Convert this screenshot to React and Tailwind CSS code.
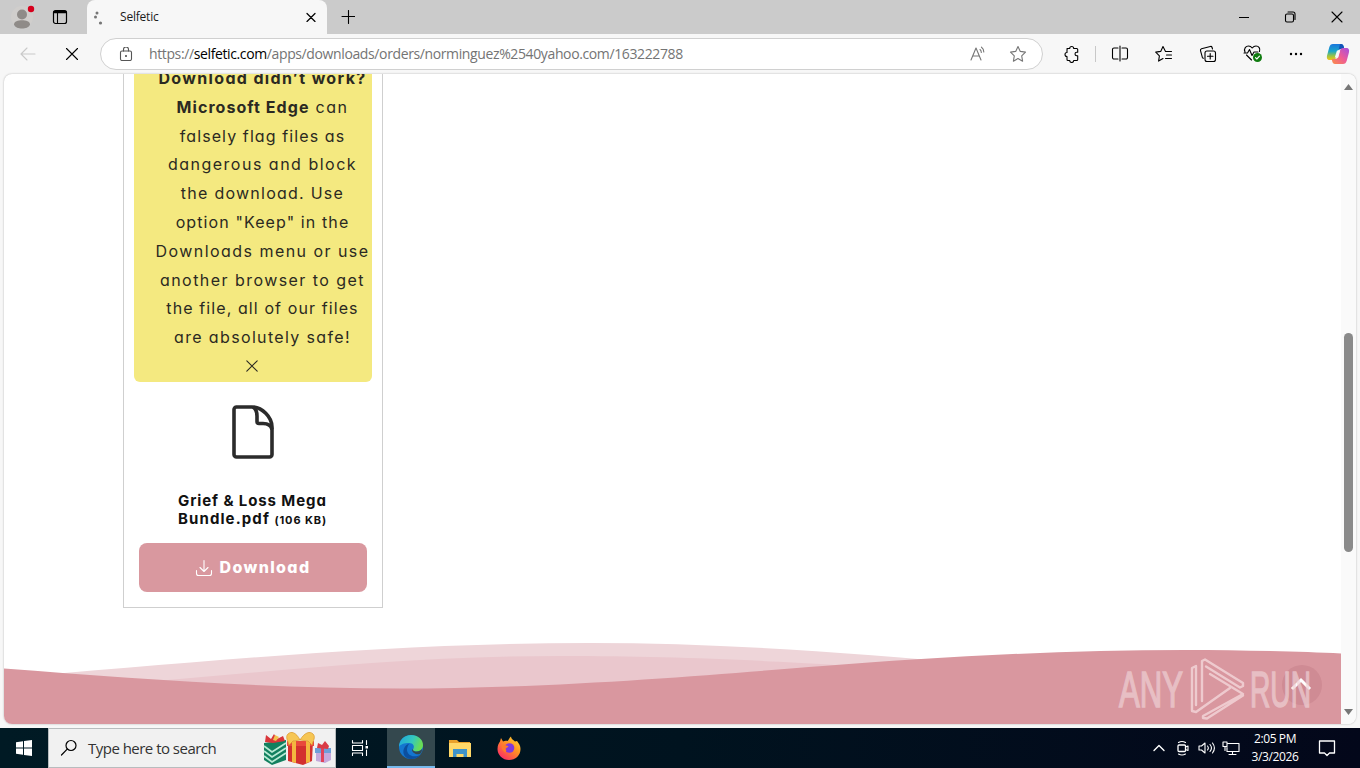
import React from 'react'

const noticeLines = [
  { text: 'falsely flag files as', track: 'tracking-[1.1px]' },
  { text: 'dangerous and block', track: 'tracking-[1.5px]' },
  { text: 'the download. Use', track: 'tracking-[1.25px]' },
  { text: 'option "Keep" in the', track: 'tracking-[1.1px]' },
  { text: 'Downloads menu or use', track: 'tracking-[1.45px]' },
  { text: 'another browser to get', track: 'tracking-[1.45px]' },
  { text: 'the file, all of our files', track: 'tracking-[1.1px]' },
  { text: 'are absolutely safe!', track: 'tracking-[1.35px]' }
]

const Icon = ({ size = 18, className = '', children }) => (
  <svg
    width={size}
    height={size}
    viewBox={`0 0 ${size} ${size}`}
    fill="none"
    stroke="currentColor"
    strokeWidth="1.1"
    strokeLinecap="round"
    strokeLinejoin="round"
    className={`shrink-0 ${className}`}
  >
    {children}
  </svg>
)

const starPath = 'M9 1.5l2.3 4.9 5.2.7-3.8 3.7.9 5.4L9 13.6l-4.6 2.6.9-5.4L1.5 7.1l5.2-.7z'

const TitleBar = () => (
  <div className="flex h-[34px] shrink-0 bg-[#cbcbcb]">
    <div className="flex w-[87px] items-center rounded-br-lg bg-[#cbcbcb] pl-[11px]">
      <svg width="26" height="26" viewBox="0 0 26 26" className="shrink-0">
        <circle cx="11" cy="13" r="11" fill="#d0cecc" />
        <circle cx="11" cy="10.500" r="5" fill="#8f8b88" />
        <path d="M3 20.500c0-3 4-4.200 8-4.200s8 1.200 8 4.200c-1 3-4.500 4-8 4s-7-1-8-4z" fill="#8f8b88" />
        <circle cx="20" cy="5" r="3.200" fill="#d6001c" />
      </svg>
      <Icon size={16} className="ml-[15px] text-black">
        <rect x="1.500" y="1.500" width="13" height="13" rx="2" strokeWidth="1.200" />
        <path d="M5.500 4v10" strokeWidth="1.100" />
        <path d="M2.500 3h11" strokeWidth="2.500" />
      </Icon>
    </div>
    <div className="flex w-[240px] items-center rounded-t-lg bg-[#f7f7f7] pl-[6px]">
      <svg width="14" height="16" viewBox="0 0 14 16" fill="#767676">
        <circle cx="4" cy="4" r="1.500" />
        <circle cx="2.500" cy="8" r="1.500" />
        <circle cx="7.500" cy="14" r="1.600" />
      </svg>
      <span className="ml-[13px] grow text-[12px] tracking-[-0.2px] text-[#1b1b1b]">Selfetic</span>
      <Icon size={10} className="mr-[11px] text-black">
        <path d="M1 1.500l8 8M9 1.500l-8 8" strokeWidth="1.200" />
      </Icon>
    </div>
    <Icon size={14} className="mt-[10px] ml-[14px] text-black">
      <path d="M7.500 .5v13M1 6.500h13" />
    </Icon>
    <div className="ml-auto flex items-center gap-[35px] pr-[17px] text-black">
      <Icon size={10}><path d="M0 5.500h10" /></Icon>
      <Icon size={12}>
        <rect x="1.500" y="3" width="8" height="8" rx="1.500" />
        <path d="M4 1h5a2 2 0 012 2v5.500" />
      </Icon>
      <Icon size={12}><path d="M1 1l10 10M11 1L1 11" /></Icon>
    </div>
  </div>
)

const CopilotLogo = () => (
  <svg width="24" height="24" viewBox="0 0 24 24">
    <defs>
      <linearGradient id="cpA" x1="0" y1="0" x2="0" y2="1">
        <stop offset="0" stopColor="#1b76dd" />
        <stop offset=".45" stopColor="#1ba7c9" />
        <stop offset=".75" stopColor="#9cc443" />
        <stop offset="1" stopColor="#f5c518" />
      </linearGradient>
      <linearGradient id="cpB" x1="1" y1="0" x2="0" y2="1">
        <stop offset="0" stopColor="#a44fe0" />
        <stop offset=".5" stopColor="#ee5b96" />
        <stop offset="1" stopColor="#fb8f45" />
      </linearGradient>
    </defs>
    <path d="M7 2h8c1.600 0 2.300 1 2.700 2.500L18.300 7H15c-2 0-2.800 1-3.300 2.800l-1.500 5.400C9.500 17 8.500 18 7 18H4c-3 0-3.600-2-2.800-5l2-7.500C3.900 3 5 2 7 2z" fill="url(#cpA)" />
    <path d="M14 2h1c1.600 0 2.300 1 2.700 2.500L18.300 7H15c-1.300 0-2 .5-2.500 1.300z" fill="#1254b8" />
    <path d="M17 22H9c-1.600 0-2.300-1-2.700-2.500L5.700 17H9c2 0 2.800-1 3.300-2.800l1.500-5.400C14.500 7 15.500 6 17 6h3c3 0 3.600 2 2.800 5l-2 7.500C20.100 21 19 22 17 22z" fill="url(#cpB)" />
    <path d="M11 8.500h3.200l-2 7H8.800z" fill="#f7f7f7" />
  </svg>
)

const Toolbar = () => (
  <div className="flex h-[39px] shrink-0 items-center bg-[#f7f7f7]">
    <Icon size={16} className="ml-[20px] text-[#c9c9c9]">
      <path d="M15 8H1M7 2L1 8l6 6" />
    </Icon>
    <Icon size={14} className="ml-[29px] text-black">
      <path d="M1.500 1.500l11 11M12.500 1.500l-11 11" />
    </Icon>
    <div className="ml-[21px] flex h-8 w-[943px] items-center rounded-full border border-[#d0d0d0] bg-white pl-[18px]">
      <Icon size={14} className="text-[#555]">
        <rect x="1.500" y="4" width="11" height="9.500" rx="1.500" />
        <path d="M4.500 4V2.500a2.500 2.500 0 015 0V4" />
        <circle cx="7" cy="9" r=".5" fill="currentColor" />
      </Icon>
      <span className="ml-4 text-[14px] tracking-[-0.38px] whitespace-nowrap text-[#747474]">
        https://<span className="text-black">selfetic.com</span>/apps/downloads/orders/norminguez%2540yahoo.com/163222788
      </span>
      <Icon size={18} className="mr-[22px] ml-auto text-[#767676]">
        <path d="M2 15L7 3l5 12M3.700 11h6.600M11 4.500c1 .8 1.300 2 1.300 3M12.500 2.200c1.600 1.200 2.300 3 2.300 4.800" />
      </Icon>
      <Icon size={18} className="mr-[15px] text-[#767676]"><path d={starPath} /></Icon>
    </div>
    <Icon size={18} className="ml-[20px] text-black">
      <path d="M4 3.500h2.700a2 2 0 014 0h3a1 1 0 011 1v2.800h-1a1.700 1.700 0 000 3.400h1v3.800a1 1 0 01-1 1h-3a2 2 0 01-4 0H5a1 1 0 01-1-1v-3a2 2 0 010-4v-3a1 1 0 011-1" />
    </Icon>
    <div className="ml-[14px] h-4 w-px bg-[#c8c8c8]" />
    <Icon size={18} className="ml-[15px] text-black">
      <path d="M7 3H3a1.500 1.500 0 00-1.500 1.500v8A1.500 1.500 0 003 14h4M11 3h4a1.500 1.500 0 011.500 1.500v8A1.500 1.500 0 0115 14h-4M9 1v15" />
    </Icon>
    <Icon size={18} className="ml-[26px] text-black">
      <path d="M10.500 6.500L8 1.500 5.700 6.400.7 7.100l3.700 3.700-.8 5.300L8 13.600M10.500 6.500h6M11.500 10h5M10.500 13.500h6" />
    </Icon>
    <Icon size={18} className="ml-[26px] text-black">
      <rect x="6" y="6" width="10.500" height="10.500" rx="2" />
      <path d="M11.200 8.500v5.500M8.500 11.200h5.500M13.500 4l-.4-1.500a1.500 1.500 0 00-1.800-1L2.500 3.800a1.500 1.500 0 00-1 1.800l1.800 6.600a1.500 1.500 0 001.200 1" />
    </Icon>
    <Icon size={20} className="ml-[26px] text-black">
      <path d="M2 8C.5 4.500 3 2 5.500 2 7.500 2 8.500 3 9.200 4c.8-1 2-2 3.800-2 2.800 0 4.500 2.500 3.500 5.500M3.500 11l5 5M1 9h3.500l2-3.500 2.500 6L11 8h4" />
      <circle cx="14.500" cy="13.500" r="4.500" fill="#107c10" stroke="none" />
      <path d="M12.500 13.700l1.300 1.300 2.700-2.800" stroke="white" />
    </Icon>
    <svg width="14" height="4" viewBox="0 0 14 4" className="ml-[26px]">
      <circle cx="2" cy="2" r="1.200" /><circle cx="7" cy="2" r="1.200" /><circle cx="12" cy="2" r="1.200" />
    </svg>
    <div className="ml-[23px]"><CopilotLogo /></div>
  </div>
)

const DownloadCard = () => (
  <div className="ml-[119px] flex h-[534px] w-[260px] flex-col border-x border-b border-[#cfcfcf] px-[10px] font-['Inter',sans-serif] [font-feature-settings:'cv11'] text-[#2b2922]">
    <div className="-mt-[10px] h-[318px] w-[238px] shrink-0 rounded-b-md bg-[#f4e980] text-center text-[16px] leading-[28.8px] whitespace-nowrap">
      <div className="pl-[19px]">
        <p className="font-bold tracking-[1.35px]">Download didn’t work?</p>
        <p className="tracking-[1.5px]"><strong className="tracking-[1.05px]">Microsoft Edge</strong> can</p>
        {noticeLines.map((line) => (
          <p key={line.text} className={line.track}>{line.text}</p>
        ))}
      </div>
      <Icon size={12} className="mx-auto mt-[8px] -translate-x-px">
        <path d="M.8.8l10.400 10.400M11.200.8L.8 11.200" />
      </Icon>
    </div>
    <svg width="44" height="56" viewBox="0 0 44 56" fill="none" stroke="#2b2b2b" strokeWidth="3.600" strokeLinejoin="round" className="mx-auto mt-[22px] shrink-0">
      <path d="M5 3h16c10 0 20 10 20 20v27.500a2.500 2.500 0 01-2.500 2.500h-33A2.500 2.500 0 013 50.500v-45A2.500 2.500 0 015.500 3z" />
      <path d="M22 3c3 2 4 6 4 9v5.500a2 2 0 002 2h4c4 0 8 1.500 9 6" />
    </svg>
    <h3 className="mt-[32px] pl-[44px] text-[15px] leading-[18px] font-bold tracking-[0.9px] whitespace-nowrap text-[#111]">
      Grief &amp; Loss Mega<br />
      <span className="tracking-[1.1px]">Bundle.pdf</span> <span className="text-[11px]">(106 KB)</span>
    </h3>
    <button className="mt-[14px] ml-[5px] flex h-[49px] w-[228px] shrink-0 items-center justify-center rounded-lg bg-[#d9989f] pb-px text-[16px] font-extrabold tracking-[1.35px] text-white">
      <Icon size={18} className="mt-[2px] mr-[7px] -ml-px">
        <path d="M9 1.500v11M5 8.500l4 4 4-4M1.500 11.500v3a2 2 0 002 2h11a2 2 0 002-2v-3" />
      </Icon>
      Download
    </button>
  </div>
)

const FooterWave = () => (
  <svg width="1337" height="84" viewBox="4 640 1337 84" className="mt-auto shrink-0">
    <path d="M4 678C180 664 380 643 590 643c130 0 250 9 400 22v30H4z" fill="#eed5d9" />
    <path d="M120 684c140-11 280-28 440-28 120 0 200 4 360 14v25H120z" fill="#eac7cd" />
    <path d="M4 668.500C130 678 260 688.500 400 688.500c160 0 320-14.500 423-22.500 107-8.500 237-16 362-16 55 0 115 1.500 156 3.500V725H4z" fill="#d9979f" />
    {/* back to top */}
    <circle cx="1302" cy="685" r="20" fill="#cf8b94" />
    <path d="M1292 689l9-9 9 9" stroke="#fff" strokeWidth="3" fill="none" />
  </svg>
)

const Watermark = () => (
  <svg width="220" height="70" viewBox="1110 655 220 70" className="absolute top-[655px] left-[1110px] overflow-visible opacity-70">
    <g fill="#eed0d4" stroke="#eed0d4" strokeWidth="1.600" fontFamily="Liberation Sans Narrow, Liberation Sans, sans-serif" fontSize="50">
      <text x="1119" y="706.500" textLength="64" lengthAdjust="spacingAndGlyphs">ANY</text>
      <text x="1250" y="706.500" textLength="61" lengthAdjust="spacingAndGlyphs">RUN</text>
    </g>
    {/* play mark: three folded bands */}
    <g fill="none" stroke="#f8e0e3" strokeWidth="2.400" strokeLinejoin="round" strokeLinecap="round">
      <path d="M1196 670v-4l-4 2v43l4 1 34-24M1196 670v35" />
      <path d="M1202 701v-40l3-1.500 38 23.500v3l-3 1.500-34-21" />
      <path d="M1210 674l33 20-40 22v2l4 .5 36-23" />
    </g>
  </svg>
)

const Browser = () => (
  <div className="flex h-[655px] bg-[#f7f7f7] px-1 pt-px pb-1">
    <div className="flex w-full overflow-hidden rounded-lg bg-white shadow-[0_0_2px_rgba(0,0,0,0.3)]">
      <main className="flex w-[1337px] flex-col">
        <DownloadCard />
        <FooterWave />
      </main>
      <div className="flex w-[15px] flex-col items-center bg-[#fafafa] pt-[10px] pb-[9px]">
        <svg width="9" height="6" viewBox="0 0 9 6" fill="#777"><path d="M4.500 0L9 6H0z" /></svg>
        <div className="mt-[243px] h-[219px] w-[9px] rounded-full bg-[#8a8a8a]" />
        <svg width="9" height="6" viewBox="0 0 9 6" className="mt-auto" fill="#777"><path d="M0 0h9L4.500 6z" /></svg>
      </div>
    </div>
  </div>
)

const Gifts = () => (
  <svg width="70" height="36" viewBox="0 0 70 36">
    <path d="M1 13l22-3v20l-14 5-8-5z" fill="#12805f" />
    <path d="M1 16l8 6 14-9M1 21l8 6 14-9M1 26l8 6 14-9" stroke="#b8ead4" strokeWidth="1.800" fill="none" />
    <path d="M2 12l1-7 5 4 3-5 3 5 6-3 2 5-12 2z" fill="#d9363a" />
    <path d="M10 10l2-5 4 2-3 4z" fill="#f2c14c" />
    <path d="M25 11h25l-1 20-9 4-15-4z" fill="#d3302f" />
    <path d="M24 11h27v5H24z" fill="#e8493c" />
    <path d="M29 11h4v22l-4-1zM43 11h4v21l-4 1z" fill="#f4b73f" />
    <path d="M37 10C33 2 28 1 25 4s0 7 1 11l4-4zM37 10c5-8 10-9 13-6s0 7-1 11l-4-4z" fill="#f6c654" stroke="#dc9c30" strokeWidth=".8" />
    <path d="M53 21h15v9l-6 3-9-2z" fill="#c4a9dc" />
    <path d="M52 18h16v5H52z" fill="#6d9fd8" />
    <path d="M58 18h3v14h-3z" fill="#e0435a" />
    <path d="M54 18l1-5 4 2 3-4 4 5-1 3z" fill="#d93b46" />
  </svg>
)

const EdgeLogo = () => (
  <svg width="24" height="24" viewBox="0 0 24 24">
    <defs>
      <linearGradient id="edgeTop" x1="0" y1="0" x2="1" y2=".3">
        <stop offset="0" stopColor="#1da4de" />
        <stop offset=".6" stopColor="#35c8bd" />
        <stop offset="1" stopColor="#69dc55" />
      </linearGradient>
    </defs>
    <circle cx="12" cy="12" r="12" fill="#1476cf" />
    <path d="M0 12C0 5 5 0 12 0s12 4.500 12 10c0 4-3 6.500-6.500 6.500-2.500 0-4.300-1-3.300-2.500 1.800-3-.2-6-4-6C5 8 1 9.500 0 12z" fill="url(#edgeTop)" />
    <path d="M8.500 12c-2 5 2 10 8.500 9.300 2-.3 4-1.300 5-2.600C19.500 22.500 16 24 12 24 5.500 24 3 18 5 13.500 6 11 8 9 10.500 8.500 9.500 9.500 9 10.500 8.500 12z" fill="#0b4f9f" />
    <path d="M14.500 13.500c-1.300 1.600 0 3 3 3 2.500 0 4.300-1 5.500-2.500 0 3-1 4.500-2.500 5-3 1-7-1-7.500-4z" fill="#34484e" />
  </svg>
)

const FirefoxLogo = () => (
  <svg width="24" height="24" viewBox="0 0 24 24">
    <defs>
      <linearGradient id="ffx" x1="1" y1="0" x2=".2" y2="1">
        <stop offset="0" stopColor="#ffe13c" />
        <stop offset=".45" stopColor="#ff9421" />
        <stop offset="1" stopColor="#fc2768" />
      </linearGradient>
    </defs>
    <path d="M4 2l2 3.500C8 4.500 9 4.500 10.500 5c1-.5 1.500-3 3.500-4.500 0 2.500 2 3 4 5l2-.5c2 2.500 3.500 5 3.500 8C23.500 19.500 18.500 24 12 24S.5 19 .5 13C.5 9 2 7 3 5.500z" fill="url(#ffx)" />
    <circle cx="12.500" cy="12" r="4.800" fill="#8039dc" />
    <path d="M4.500 9c3-1 4 .5 7 1-.5 1.500-2 1.500-3 3 1 1 1 2 0 3.500C5.500 15.500 4.500 12 4.500 9z" fill="#ff7a2b" />
  </svg>
)

const Taskbar = () => (
  <div className="flex h-10 items-center bg-linear-to-r from-[#001a24] via-[#00131f] to-[#03071a] text-white">
    <div className="flex w-12 justify-center">
      <svg width="16" height="16" viewBox="0 0 16 16" fill="white">
        <path d="M0 2.300L7 1.300v6.200H0zM8 1.100L16 0v7.500H8zM0 8.500h7v6.200l-7-1zM8 8.500h8V16l-8-1.100z" />
      </svg>
    </div>
    <div className="flex h-10 w-[288px] items-center border border-[#b8bcbe] bg-[#f1f1f1] pl-[11px]">
      <Icon size={18} className="text-black">
        <circle cx="11" cy="6.500" r="5" strokeWidth="1.200" />
        <path d="M7.200 10.200L1.500 16" strokeWidth="1.200" />
      </Icon>
      <span className="ml-[10px] text-[15px] tracking-[-0.52px] whitespace-nowrap text-[#333]">Type here to search</span>
      <div className="mr-[2px] ml-auto"><Gifts /></div>
    </div>
    <div className="flex w-[51px] justify-center pr-[3px]">
      <Icon size={18}>
        <path d="M1.500 1.500v2.500h10V1.500M1.500 16.500V14h10v2.500M1.500 6.500h10v5h-10zM15.500 1.500v4M15.500 11v5.500" />
        <path d="M14.500 7h2.500v2.500h-2.500z" fill="white" stroke="none" />
      </Icon>
    </div>
    <div className="flex h-10 w-12 items-center justify-center border-b-2 border-[#76b9ed] bg-[#34484e]"><EdgeLogo /></div>
    <div className="flex w-[49px] justify-center">
      <svg width="22" height="19" viewBox="0 0 22 19">
        <path d="M0 1h8l2 2h11v15H0z" fill="#e9a12b" />
        <path d="M0 4h22v14H0z" fill="#ffd868" />
        <path d="M4 10h14v8h-3.500v-3h-7v3H4z" fill="#3f93c9" />
      </svg>
    </div>
    <div className="flex w-[49px] justify-center"><FirefoxLogo /></div>
    <div className="ml-auto flex items-center pr-[24px]">
      <Icon size={12}><path d="M1 8.500l5-5 5 5" strokeWidth="1.400" /></Icon>
      <Icon size={16} className="ml-[10px]">
        <rect x="3" y="5" width="7.500" height="6.500" rx="1" strokeWidth="1.300" />
        <path d="M10.500 7l2.500-1v4.500l-2.500-1M3.500 2.500c2-1.200 5-1.200 7 0M3.500 14c2 1.200 5 1.200 7 0" />
      </Icon>
      <Icon size={18} className="ml-[7px]">
        <path d="M1 7v4h2.500L7 14V4L3.500 7zM9.500 7c1 1.200 1 2.800 0 4M12 5.500c1.700 2 1.700 5 0 7M14.500 4c2.300 3 2.300 7 0 10" />
      </Icon>
      <Icon size={18} className="ml-[6px]">
        <path d="M6 4.500h11v8H5V8.500M10.500 12.500v3M7 15.500h7M1 3h4v4.500H1zM3 7.500v4" />
      </Icon>
      <div className="ml-[6px] w-[58px] text-center text-[12px] leading-[18px] tracking-[-0.4px] whitespace-nowrap">
        <p>2:05 PM</p>
        <p>3/3/2026</p>
      </div>
      <Icon size={18} className="ml-[14px]">
        <path d="M1.500 2h15v12h-5l-2.500 2.500L6.500 14h-5z" strokeWidth="1.300" />
      </Icon>
    </div>
  </div>
)

export default function App() {
  return (
    <div className="relative flex h-[768px] w-[1360px] flex-col overflow-hidden font-['Open_Sans',sans-serif]">
      <TitleBar />
      <Toolbar />
      <Browser />
      <Taskbar />
      <Watermark />
    </div>
  )
}
